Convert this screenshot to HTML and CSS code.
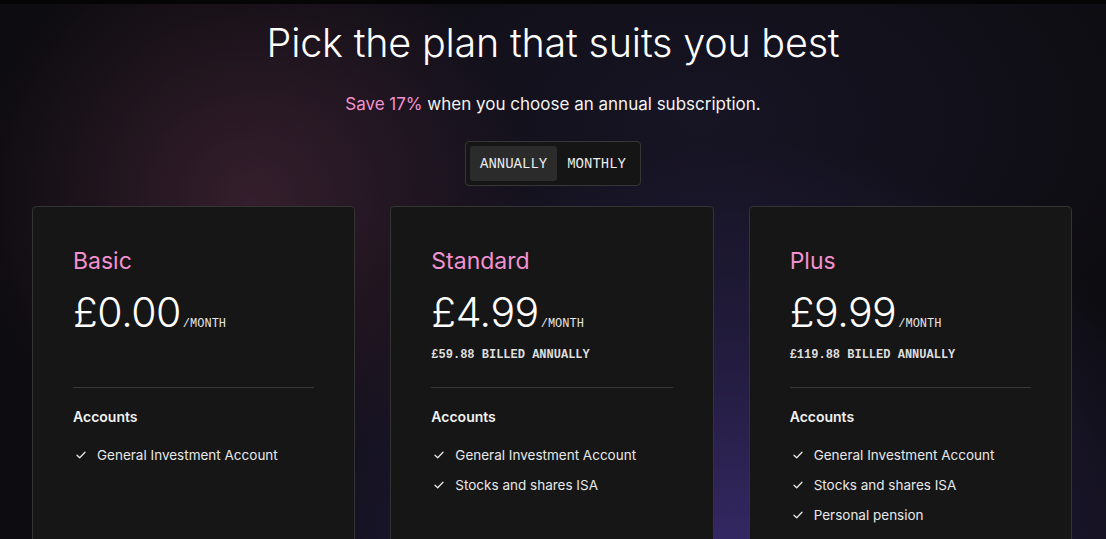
FILE: index.html
```html
<!DOCTYPE html>
<html lang="en">
<head>
<meta charset="utf-8">
<title>Pricing</title>
<link rel="stylesheet" href="styles.css">
</head>
<body>
<div class="topbar"></div>
<main class="page">
  <h1 class="title">Pick the plan that suits you best</h1>
  <p class="subtitle"><span class="accent">Save 17%</span> when you choose an annual subscription.</p>
  <div class="toggle">
    <button class="toggle-btn active">ANNUALLY</button>
    <button class="toggle-btn">MONTHLY</button>
  </div>
  <section class="plans">
    <article class="card">
      <h2 class="plan-name">Basic</h2>
      <div class="price"><span class="amount">£0.00</span><span class="per">/MONTH</span></div>
      <div class="billed"></div>
      <hr class="divider">
      <h3 class="section">Accounts</h3>
      <ul class="features">
        <li><svg class="check" viewBox="0 0 10 8" width="10" height="8"><path d="M1 4.2 L3.7 6.8 L9 1.2" fill="none" stroke="#e6e6e6" stroke-width="1.3" stroke-linecap="round" stroke-linejoin="round"/></svg>General Investment Account</li>
      </ul>
    </article>
    <article class="card">
      <h2 class="plan-name">Standard</h2>
      <div class="price"><span class="amount">£4.99</span><span class="per">/MONTH</span></div>
      <div class="billed">£59.88 BILLED ANNUALLY</div>
      <hr class="divider">
      <h3 class="section">Accounts</h3>
      <ul class="features">
        <li><svg class="check" viewBox="0 0 10 8" width="10" height="8"><path d="M1 4.2 L3.7 6.8 L9 1.2" fill="none" stroke="#e6e6e6" stroke-width="1.3" stroke-linecap="round" stroke-linejoin="round"/></svg>General Investment Account</li>
        <li><svg class="check" viewBox="0 0 10 8" width="10" height="8"><path d="M1 4.2 L3.7 6.8 L9 1.2" fill="none" stroke="#e6e6e6" stroke-width="1.3" stroke-linecap="round" stroke-linejoin="round"/></svg>Stocks and shares ISA</li>
      </ul>
    </article>
    <article class="card">
      <h2 class="plan-name">Plus</h2>
      <div class="price"><span class="amount">£9.99</span><span class="per">/MONTH</span></div>
      <div class="billed">£119.88 BILLED ANNUALLY</div>
      <hr class="divider">
      <h3 class="section">Accounts</h3>
      <ul class="features">
        <li><svg class="check" viewBox="0 0 10 8" width="10" height="8"><path d="M1 4.2 L3.7 6.8 L9 1.2" fill="none" stroke="#e6e6e6" stroke-width="1.3" stroke-linecap="round" stroke-linejoin="round"/></svg>General Investment Account</li>
        <li><svg class="check" viewBox="0 0 10 8" width="10" height="8"><path d="M1 4.2 L3.7 6.8 L9 1.2" fill="none" stroke="#e6e6e6" stroke-width="1.3" stroke-linecap="round" stroke-linejoin="round"/></svg>Stocks and shares ISA</li>
        <li><svg class="check" viewBox="0 0 10 8" width="10" height="8"><path d="M1 4.2 L3.7 6.8 L9 1.2" fill="none" stroke="#e6e6e6" stroke-width="1.3" stroke-linecap="round" stroke-linejoin="round"/></svg>Personal pension</li>
      </ul>
    </article>
  </section>
</main>
</body>
</html>
```
FILE: styles.css
```css
* { box-sizing: border-box; }
html, body { height: 100%; }
body {
  margin: 0;
  font-family: Inter, "Noto Sans", sans-serif;
  color: #f2f2f2;
  overflow: hidden;
  background:
    radial-gradient(circle at 250px 200px, rgba(66, 36, 54, 0.75) 0, rgba(66, 36, 54, 0) 280px),
    radial-gradient(ellipse 480px 430px at 730px 570px, rgba(54, 42, 104, 1) 0, rgba(54, 42, 104, 0) 100%),
    radial-gradient(ellipse 500px 300px at 700px 120px, rgba(30, 26, 50, 0.6) 0, rgba(30, 26, 50, 0) 100%),
    #0d0c10;
}
.topbar { height: 4px; background: #050505; }
.page {
  display: flex;
  flex-direction: column;
  align-items: center;
  padding-top: 14px;
}
.title {
  margin: 0;
  font-size: 39.5px;
  line-height: 50px;
  font-weight: 300;
  letter-spacing: -0.2px;
  color: #ffffff;
}
.subtitle {
  margin: 24px 0 0;
  font-size: 17px;
  line-height: 24px;
  font-weight: 400;
  color: #f2f2f2;
}
.accent { color: #f291cf; }
.toggle {
  margin-top: 25px;
  display: flex;
  padding: 4px;
  background: #151515;
  border: 1px solid #363636;
  border-radius: 4px;
}
.toggle-btn {
  height: 35px;
  padding: 0 10px;
  border: 0;
  border-radius: 3px;
  background: transparent;
  color: #eeeeee;
  font-family: "Liberation Mono", "DejaVu Sans Mono", monospace;
  font-size: 14px;
  font-weight: 400;
  cursor: pointer;
}
.toggle-btn.active { background: #2b2b2b; }
.plans {
  margin-top: 20px;
  width: 1040px;
  margin-left: -2px;
  display: grid;
  grid-template-columns: repeat(3, 1fr);
  gap: 35px;
}
.card {
  background: #161616;
  border: 1px solid #343434;
  border-radius: 4px;
  padding: 38px 40px 60px;
  min-height: 400px;
}
.plan-name {
  margin: 0;
  font-size: 23px;
  line-height: 32px;
  font-weight: 400;
  color: #f291cf;
}
.price {
  margin-top: 12px;
  display: flex;
  align-items: baseline;
  height: 48px;
}
.amount {
  font-size: 41px;
  line-height: 46px;
  font-weight: 300;
  letter-spacing: -0.5px;
  color: #ffffff;
}
.per {
  margin-left: 2px;
  font-family: "Liberation Mono", "DejaVu Sans Mono", monospace;
  font-size: 12px;
  color: #e6e6e6;
}
.billed {
  margin-top: 10px;
  height: 16px;
  font-family: "Liberation Mono", "DejaVu Sans Mono", monospace;
  font-size: 12px;
  line-height: 16px;
  font-weight: 700;
  color: #dedede;
}
.divider {
  margin: 24px 0 0;
  border: 0;
  height: 1px;
  background: #383838;
}
.section {
  margin: 19px 0 0;
  font-size: 14px;
  line-height: 20px;
  font-weight: 600;
  color: #f2f2f2;
}
.features {
  list-style: none;
  margin: 18px 0 0;
  padding: 0;
  display: flex;
  flex-direction: column;
  gap: 10px;
}
.features li {
  display: flex;
  align-items: center;
  font-size: 13.5px;
  line-height: 20px;
  color: #e8e8e8;
}
.check {
  margin-left: 3px;
  margin-right: 11px;
  flex: none;
}
```
